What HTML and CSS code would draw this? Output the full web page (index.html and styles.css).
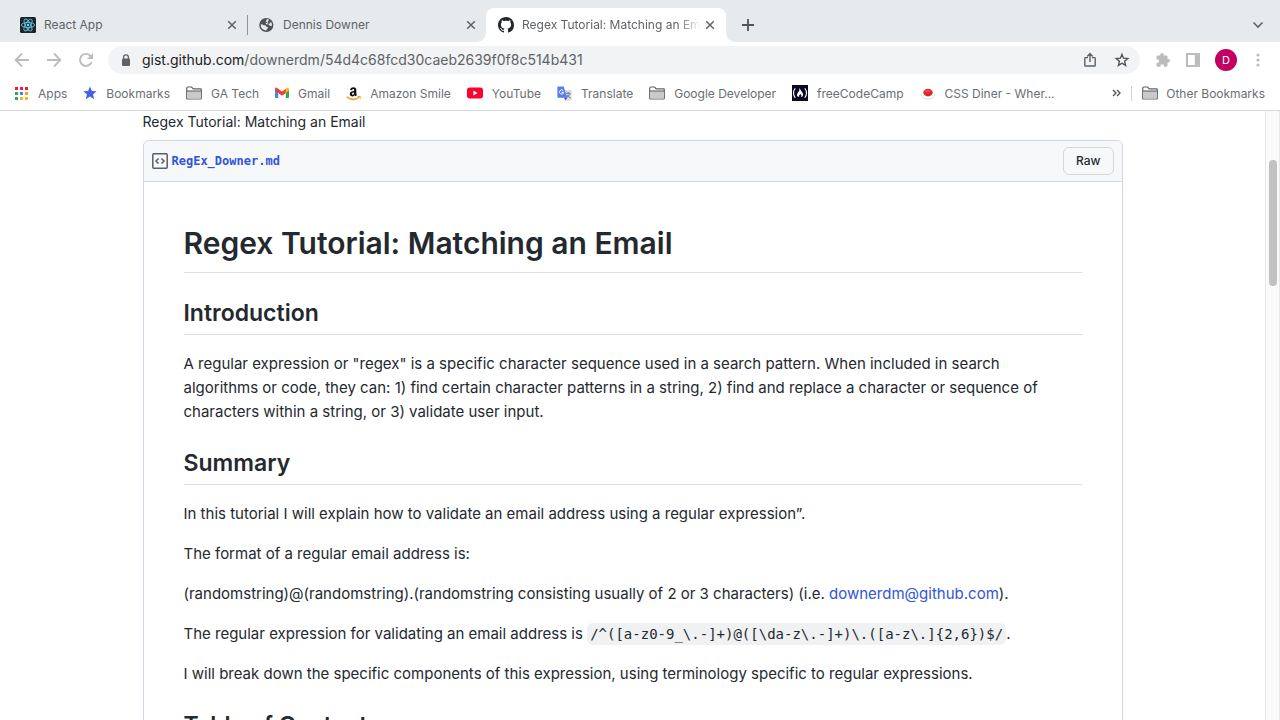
FILE: index.html
```html
<!DOCTYPE html>
<html lang="en">
<head>
<meta charset="utf-8">
<title>Regex Tutorial: Matching an Email</title>
<link rel="stylesheet" href="styles.css">
</head>
<body>
<svg class="defs" aria-hidden="true">
  <symbol id="close" viewBox="0 0 10 10"><path d="M1.2 1.2l7.6 7.6M8.8 1.2L1.2 8.8" fill="none" stroke="#5f6368" stroke-width="1.5"/></symbol>
  <symbol id="folder" viewBox="0 0 16 14"><path d="M.7 12.3V2.2Q.7 1 1.9 1H5.6L7.2 2.8H14.6Q15.3 2.8 15.3 3.5V12.3Q15.3 13 14.6 13H1.4Q.7 13 .7 12.3Z" fill="#fff" stroke="#5f6368" stroke-width="1.2"/><path d="M1.3 5H14.7V12.4H1.3Z" fill="#cacaca"/><path d="M1 5H15" stroke="#5f6368" stroke-width="1.1"/></symbol>
</svg>

<header class="browser">
  <nav class="tabs" aria-label="Tabs">
    <div class="tab">
      <svg class="tab-icon" viewBox="0 0 16 16"><rect width="16" height="16" rx="1.5" fill="#20232a"/><g fill="none" stroke="#5cc5dd" stroke-width=".9"><ellipse cx="8" cy="8" rx="6.6" ry="2.6"/><ellipse cx="8" cy="8" rx="6.6" ry="2.6" transform="rotate(60 8 8)"/><ellipse cx="8" cy="8" rx="6.6" ry="2.6" transform="rotate(120 8 8)"/></g><circle cx="8" cy="8" r="1.3" fill="#61dafb"/></svg>
      <span class="tab-title">React App</span>
      <button class="plain" aria-label="Close React App"><svg width="10" height="10"><use href="#close"/></svg></button>
    </div>
    <div class="tab tab-divided">
      <svg class="tab-icon" viewBox="0 0 16 16"><circle cx="7.3" cy="8" r="7.1" fill="#505458"/><path d="M1.9 6.9L5.2 8.2 6.8 8.4 7.4 9.8 9 10.2 8.6 11.6 7 13.5Q3.2 13 1.9 9.8ZM8 2L10.2 2.8 9 4.3 9 5.4 6.8 6 7 7.2 9.8 7.2 11 8.9 12.9 8.8Q13.2 7.5 12.4 5.3L10.8 5.8 10.4 6.9 8.5 6.6 8.2 5.2 6.7 4.8Z" fill="#e6eaed"/></svg>
      <span class="tab-title">Dennis Downer</span>
      <button class="plain" aria-label="Close Dennis Downer"><svg width="10" height="10"><use href="#close"/></svg></button>
    </div>
    <div class="tab tab-active">
      <svg class="tab-icon" viewBox="0 0 16 16"><path fill="#24292f" d="M8 0C3.58 0 0 3.58 0 8c0 3.54 2.29 6.53 5.47 7.59.4.07.55-.17.55-.38 0-.19-.01-.82-.01-1.49-2.01.37-2.53-.49-2.69-.94-.09-.23-.48-.94-.82-1.13-.28-.15-.68-.52-.01-.53.63-.01 1.08.58 1.23.82.72 1.21 1.87.87 2.33.66.07-.52.28-.87.51-1.07-1.78-.2-3.64-.89-3.64-3.95 0-.87.31-1.59.82-2.15-.08-.2-.36-1.02.08-2.12 0 0 .67-.21 2.2.82.64-.18 1.32-.27 2-.27s1.36.09 2 .27c1.53-1.04 2.2-.82 2.2-.82.44 1.1.16 1.92.08 2.12.51.56.82 1.27.82 2.15 0 3.07-1.87 3.75-3.65 3.95.29.25.54.73.54 1.48 0 1.07-.01 1.93-.01 2.2 0 .21.15.46.55.38A8.01 8.01 0 0 0 16 8c0-4.42-3.58-8-8-8z"/></svg>
      <span class="tab-title tab-faded">Regex Tutorial: Matching an Email</span>
      <button class="plain" aria-label="Close Regex Tutorial"><svg width="10" height="10"><use href="#close"/></svg></button>
    </div>
    <button class="plain new-tab" aria-label="New tab"><svg width="12" height="12" viewBox="0 0 12 12"><path d="M6 0V12M0 6H12" stroke="#505458" stroke-width="1.8"/></svg></button>
    <button class="plain tab-search" aria-label="Search tabs"><svg width="12" height="8" viewBox="0 0 12 8"><path d="M1.5 1.5L6 6 10.5 1.5" fill="none" stroke="#5f6368" stroke-width="1.6"/></svg></button>
  </nav>

  <div class="toolbar">
    <button class="plain" aria-label="Back"><svg width="16" height="16" viewBox="0 0 16 16"><path d="M15 8H2M8 1.5L1.6 8 8 14.5" fill="none" stroke="#babcbe" stroke-width="1.8"/></svg></button>
    <button class="plain" aria-label="Forward"><svg width="16" height="16" viewBox="0 0 16 16"><path d="M1 8H14M8 1.5L14.4 8 8 14.5" fill="none" stroke="#babcbe" stroke-width="1.8"/></svg></button>
    <button class="plain" aria-label="Reload"><svg width="16" height="16" viewBox="0 0 16 16"><path d="M13.6 10A6 6 0 1 1 12.4 3.8L14 5.4" fill="none" stroke="#babcbe" stroke-width="1.9"/><path d="M15 1V7H9Z" fill="#babcbe"/></svg></button>
    <div class="address">
      <svg width="10" height="13" viewBox="0 0 10 13"><rect x="1" y="4.6" width="8" height="7.4" rx="1" fill="#5f6368"/><path d="M2.6 5V3.2A2.4 2.4 0 0 1 7.4 3.2V5" fill="none" stroke="#5f6368" stroke-width="1.3"/></svg>
      <span class="url"><span class="host">gist.github.com</span>/downerdm/54d4c68fcd30caeb2639f0f8c514b431</span>
      <button class="plain" aria-label="Share"><svg width="12" height="16" viewBox="0 0 12 16"><path d="M4 5.6H1.4Q.8 5.6 .8 6.2V13.4Q.8 14 1.4 14H10.6Q11.2 14 11.2 13.4V6.2Q11.2 5.6 10.6 5.6H8M6 10V1.8M3.2 4.4L6 1.6 8.8 4.4" fill="none" stroke="#5f6368" stroke-width="1.4"/></svg></button>
      <button class="plain" aria-label="Bookmark this page"><svg width="16" height="16" viewBox="0 0 16 16"><path d="M8 2.4L9.6 6.2 13.8 6.6 10.6 9.3 11.6 13.4 8 11.2 4.4 13.4 5.4 9.3 2.2 6.6 6.4 6.2Z" fill="none" stroke="#505458" stroke-width="1.4"/></svg></button>
    </div>
    <div class="tools">
      <button class="plain" aria-label="Extensions"><svg width="16" height="16" viewBox="0 0 16 16"><path d="M1.5 4.5Q1.5 3.4 2.6 3.4H5.2V2.7A1.8 1.8 0 0 1 8.8 2.7V3.4H11.4Q12.5 3.4 12.5 4.5V7H13.2A1.8 1.8 0 0 1 13.2 10.6H12.5V13.6Q12.5 14.7 11.4 14.7H9V14A1.8 1.8 0 0 0 5.4 14V14.7H2.6Q1.5 14.7 1.5 13.6V11H2.2A1.8 1.8 0 0 0 2.2 7.2H1.5Z" fill="#babcbe"/></svg></button>
      <button class="plain" aria-label="Side panel"><svg width="14" height="14" viewBox="0 0 14 14"><path fill-rule="evenodd" d="M0 0H14V14H0ZM2 2V12H8.8V2Z" fill="#babcbe"/></svg></button>
      <button class="plain avatar" aria-label="Profile">D</button>
      <button class="plain" aria-label="Menu"><svg width="12" height="14" viewBox="0 0 12 14"><g fill="#babcbe"><circle cx="6" cy="2" r="1.6"/><circle cx="6" cy="7" r="1.6"/><circle cx="6" cy="12" r="1.6"/></g></svg></button>
    </div>
  </div>

  <nav class="bookmarks" aria-label="Bookmarks">
    <a href="#"><svg width="14" height="14" viewBox="0 0 14 14"><path d="M0 1H3V4H0ZM5 1H8V4H5ZM10 1H13V4H10Z" fill="#f01a43"/><path d="M0 6H3V9H0Z" fill="#34a853"/><path d="M5 6H8V9H5Z" fill="#4f7ff0"/><path d="M10 6H13V9H10Z" fill="#f0a030"/><path d="M0 11H3V14H0Z" fill="#34a853"/><path d="M5 11H8V14H5ZM10 11H13V14H10Z" fill="#f3b72e"/></svg>Apps</a>
    <a href="#"><svg width="14" height="14" viewBox="0 0 14 14"><path d="M7 .6L8.9 5 13.6 5.3 10 8.4 11.2 13.2 7 10.6 2.8 13.2 4 8.4 .4 5.3 5.1 5Z" fill="#4460e8"/></svg>Bookmarks</a>
    <a href="#"><svg width="16" height="14"><use href="#folder"/></svg>GA Tech</a>
    <a href="#"><svg width="14" height="12" viewBox="0 0 14 12"><path d="M0 2.2V10.2Q0 11 .9 11H3.2V4.5Z" fill="#4285f4"/><path d="M14 2.2V10.2Q14 11 13.1 11H10.8V4.5Z" fill="#34a853"/><path d="M10.8 1.7L12.2.7Q14 0 14 2.2V3.5L10.8 6Z" fill="#fbbc04"/><path d="M0 2.2Q0 0 1.8.7L7 4.6 10.8 1.7V6L7 8.8 0 3.6Z" fill="#ea4335"/></svg>Gmail</a>
    <a href="#"><svg width="15" height="15" viewBox="0 0 15 15"><path d="M4.1 4.1Q4.4 1.2 7.4 1.2 10.3 1.2 10.3 4V7.6Q10.3 8.5 11 9L9.6 10.3Q9 9.9 8.6 9.2 7.7 10.4 6.2 10.4 3.7 10.4 3.7 8 3.7 5.4 8.1 5.1V4.3Q8.1 3 7.2 3 6.3 3 6.1 4.3ZM8.1 6.5Q5.9 6.5 5.9 7.8 5.9 8.8 6.8 8.8 8.1 8.8 8.1 6.5Z" fill="#111"/><path d="M.8 10.8Q6.8 15.6 13.2 11.4" fill="none" stroke="#f7a32b" stroke-width="1.5"/><path d="M11.5 10.5H14.2V12.8" fill="none" stroke="#f7a32b"/></svg>Amazon Smile</a>
    <a href="#"><svg width="16" height="12" viewBox="0 0 16 12"><rect y=".5" width="16" height="11" rx="2.7" fill="#ff0033"/><path d="M6.4 3.6V8.4L10.5 6Z" fill="#fff"/></svg>YouTube</a>
    <a href="#"><svg width="15" height="15" viewBox="0 0 15 15"><path d="M6 4H13.8Q14.6 4 14.6 4.8V14.5H9Z" fill="#dadce0"/><path d="M8.5 7.3H13.6M11 6V7.3M12.8 7.5Q12 10.5 9.5 11.5M10 9Q11.3 11 13.5 12" fill="none" stroke="#667c92"/><path d="M1.2.5H6.7L10.3 11.8H1.2Q.4 11.8.4 11V1.3Q.4.5 1.2.5Z" fill="#587cf0"/><path d="M7.2 11.8H10.3L8.2 14.5Z" fill="#3647d1"/><path d="M6.3 4.7A2.1 2.1 0 1 0 6.7 6.4H4.8" fill="none" stroke="#fff"/></svg>Translate</a>
    <a href="#"><svg width="16" height="14"><use href="#folder"/></svg>Google Developer</a>
    <a href="#"><svg width="16" height="16" viewBox="0 0 16 16"><path d="M0 0H16V16H0Z" fill="#0a0a23"/><path d="M3.2 3.2Q-.2 8 3.2 12.8M12.8 3.2Q16.2 8 12.8 12.8" fill="none" stroke="#fff" stroke-width="1.1"/><path d="M7.6 3Q8.4 5 10 7 12.2 10 10 11.8L9 12Q10 10.5 8.7 8.8 8.5 9.8 7.8 9.4 6.5 10.8 7.2 12 3.8 11.6 5.6 8.1 7.7 6 7.6 3Z" fill="#fff"/></svg>freeCodeCamp</a>
    <a href="#"><svg width="16" height="16" viewBox="0 0 16 16"><path d="M1 9.2Q2.2 14 8 14 13.8 14 15 9.2" fill="none" stroke="#e0e0e0"/><ellipse cx="8" cy="7.6" rx="4.7" ry="3.8" fill="#e5222b"/><ellipse cx="7.6" cy="6.3" rx="2.8" ry="1.3" fill="#f64a4a"/></svg>CSS Diner - Wher...</a>
    <button class="plain overflow" aria-label="More bookmarks"><svg width="9" height="8" viewBox="0 0 9 8"><path d="M1 1L4 4 1 7M5 1L8 4 5 7" fill="none" stroke="#505458" stroke-width="1.4"/></svg></button>
    <a class="other" href="#"><svg width="16" height="14"><use href="#folder"/></svg>Other Bookmarks</a>
  </nav>
</header>

<div class="viewport">
  <main class="page">
    <div class="column">
      <p class="description">Regex Tutorial: Matching an Email</p>
      <section class="file">
        <div class="file-header">
          <svg width="16" height="16" viewBox="0 0 16 16"><rect x=".8" y=".8" width="14.4" height="14.4" rx="1" fill="none" stroke="#57606a" stroke-width="1.5"/><path d="M6.5 5.5L4 8 6.5 10.5M9.5 5.5L12 8 9.5 10.5" fill="none" stroke="#57606a" stroke-width="1.5"/></svg>
          <a class="file-name" href="#">RegEx_Downer.md</a>
          <button class="raw">Raw</button>
        </div>
        <article class="markdown">
          <h1>Regex Tutorial: Matching an Email</h1>
          <h2>Introduction</h2>
          <p>A regular expression or "regex" is a specific character sequence used in a search pattern. When included in search algorithms or code, they can: 1) find certain character patterns in a string, 2) find and replace a character or sequence of characters within a string, or 3) validate user input.</p>
          <h2>Summary</h2>
          <p>In this tutorial I will explain how to validate an email address using a regular expression”.</p>
          <p>The format of a regular email address is:</p>
          <p>(randomstring)@(randomstring).(randomstring consisting usually of 2 or 3 characters) (i.e. <a href="#">downerdm@github.com</a>).</p>
          <p>The regular expression for validating an email address is <code>/^([a-z0-9_\.-]+)@([\da-z\.-]+)\.([a-z\.]{2,6})$/</code>.</p>
          <p>I will break down the specific components of this expression, using terminology specific to regular expressions.</p>
          <h2>Table of Contents</h2>
        </article>
      </section>
    </div>
  </main>
  <div class="scrollbar"><div class="thumb"></div></div>
</div>
</body>
</html>
```
FILE: styles.css
```css
* { box-sizing: border-box; }
body {
  margin: 0;
  height: 100vh;
  display: flex;
  flex-direction: column;
  overflow: hidden;
  background: #fff;
  color: #24292f;
  font-family: Inter, "Liberation Sans", sans-serif;
}
svg { display: block; flex: none; }
a { color: #3054dc; text-decoration: none; }
.defs { position: absolute; width: 0; height: 0; }
.plain {
  display: flex;
  align-items: center;
  justify-content: center;
  flex: none;
  padding: 0;
  border: 0;
  background: none;
  font: inherit;
}

.browser { flex: none; border-bottom: 1px solid #d9dadc; }

.tabs {
  display: flex;
  height: 42px;
  padding: 8px 16px 0 8px;
  background: #e6eaed;
  color: #5f6368;
  font-size: 12px;
}
.tab {
  display: flex;
  align-items: center;
  gap: 8px;
  width: 239px;
  padding: 0 10px 0 12px;
}
.tab-divided {
  background: linear-gradient(#909498, #909498) 0 7px / 1px 20px no-repeat;
}
.tab-icon { width: 16px; height: 16px; }
.tab-title {
  flex: 1;
  padding-bottom: 2px;
  overflow: hidden;
  white-space: nowrap;
}
.tab-active {
  position: relative;
  width: 240px;
  padding-right: 11px;
  border-radius: 8px 8px 0 0;
  background: #fff;
}
.tab-active::before,
.tab-active::after {
  content: "";
  position: absolute;
  bottom: 0;
  width: 8px;
  height: 8px;
}
.tab-active::before { left: -8px; background: radial-gradient(circle at 0 0, #e6eaed 7px, #fff 8px); }
.tab-active::after { right: -8px; background: radial-gradient(circle at 100% 0, #e6eaed 7px, #fff 8px); }
.tab-faded {
  margin-right: -3px;
  -webkit-mask-image: linear-gradient(90deg, #000 88%, transparent);
  mask-image: linear-gradient(90deg, #000 88%, transparent);
}
.new-tab { margin-left: 16px; }
.tab-search { margin-left: auto; }

.toolbar {
  display: flex;
  align-items: center;
  gap: 16px;
  height: 36px;
  padding: 0 16px 0 14px;
}
.address {
  flex: 1;
  display: flex;
  align-items: center;
  gap: 18px;
  height: 28px;
  margin-left: -2px;
  padding: 0 10px 0 13px;
  border-radius: 14px;
  background: #f1f3f4;
}
.url {
  flex: 1;
  margin-left: -7px;
  padding-bottom: 2px;
  color: #5f6368;
  font-size: 14px;
}
.host { color: #202124; }
.tools { display: flex; align-items: center; gap: 15px; margin-left: -1px; }
.avatar {
  width: 22px;
  height: 22px;
  border-radius: 50%;
  background: #c2005f;
  color: #fff;
  font-size: 11px;
}

.bookmarks {
  display: flex;
  align-items: center;
  gap: 16px;
  height: 32px;
  padding: 0 15px 2px;
  white-space: nowrap;
}
.bookmarks a {
  display: flex;
  align-items: center;
  gap: 9px;
  color: #6a6e73;
  font-size: 12px;
}
.overflow { margin-left: auto; }
.bookmarks .other {
  margin-left: -6px;
  padding-left: 11px;
  gap: 8px;
  background: linear-gradient(#cfd1d4, #cfd1d4) 0 50% / 1px 16px no-repeat;
}

.viewport { flex: 1; min-height: 0; display: flex; overflow: hidden; }
.page { flex: 1; min-width: 0; overflow: hidden; }
.column { max-width: 980px; margin: 0 auto; }
.scrollbar {
  flex: none;
  width: 15px;
  padding: 49px 2px 0 3px;
  border: solid #e8e8e8;
  border-width: 0 1px;
  background: #fafafa;
}
.thumb { height: 126px; width: 8px; border-radius: 4px; background: #c1c1c1; }

.description { margin: 0 0 7px; font-size: 14px; line-height: 22px; }
.file { border: 1px solid #d0d7de; border-radius: 6px 6px 0 0; }
.file-header {
  display: flex;
  align-items: center;
  gap: 4px;
  height: 41px;
  padding: 0 8px;
  border-bottom: 1px solid #d0d7de;
  border-radius: 6px 6px 0 0;
  background: #f6f8fa;
}
.file-name { font: bold 12px "DejaVu Sans Mono", monospace; }
.raw {
  height: 28px;
  margin-left: auto;
  padding: 0 12px 2px;
  border: 1px solid #d5d8da;
  border-radius: 6px;
  background: #f6f8fa;
  color: #24292f;
  font: 500 12px Inter, "Liberation Sans", sans-serif;
}

.markdown { padding: 40px; font-size: 15px; line-height: 24px; }
.markdown h1,
.markdown h2 {
  margin: 23px 0 17px;
  border-bottom: 1px solid #d8dee4;
  font-weight: 600;
}
.markdown h1 { margin: 0 0 24px; padding-bottom: 8px; font-size: 30px; line-height: 42px; }
.markdown h2 { padding-bottom: 5px; font-size: 23px; line-height: 32px; }
.markdown p { max-width: 888px; margin: 0 0 16px; }
.markdown code {
  padding: 3px;
  border-radius: 6px;
  background: #eff1f3;
  font: 14px "DejaVu Sans Mono", monospace;
}
```
